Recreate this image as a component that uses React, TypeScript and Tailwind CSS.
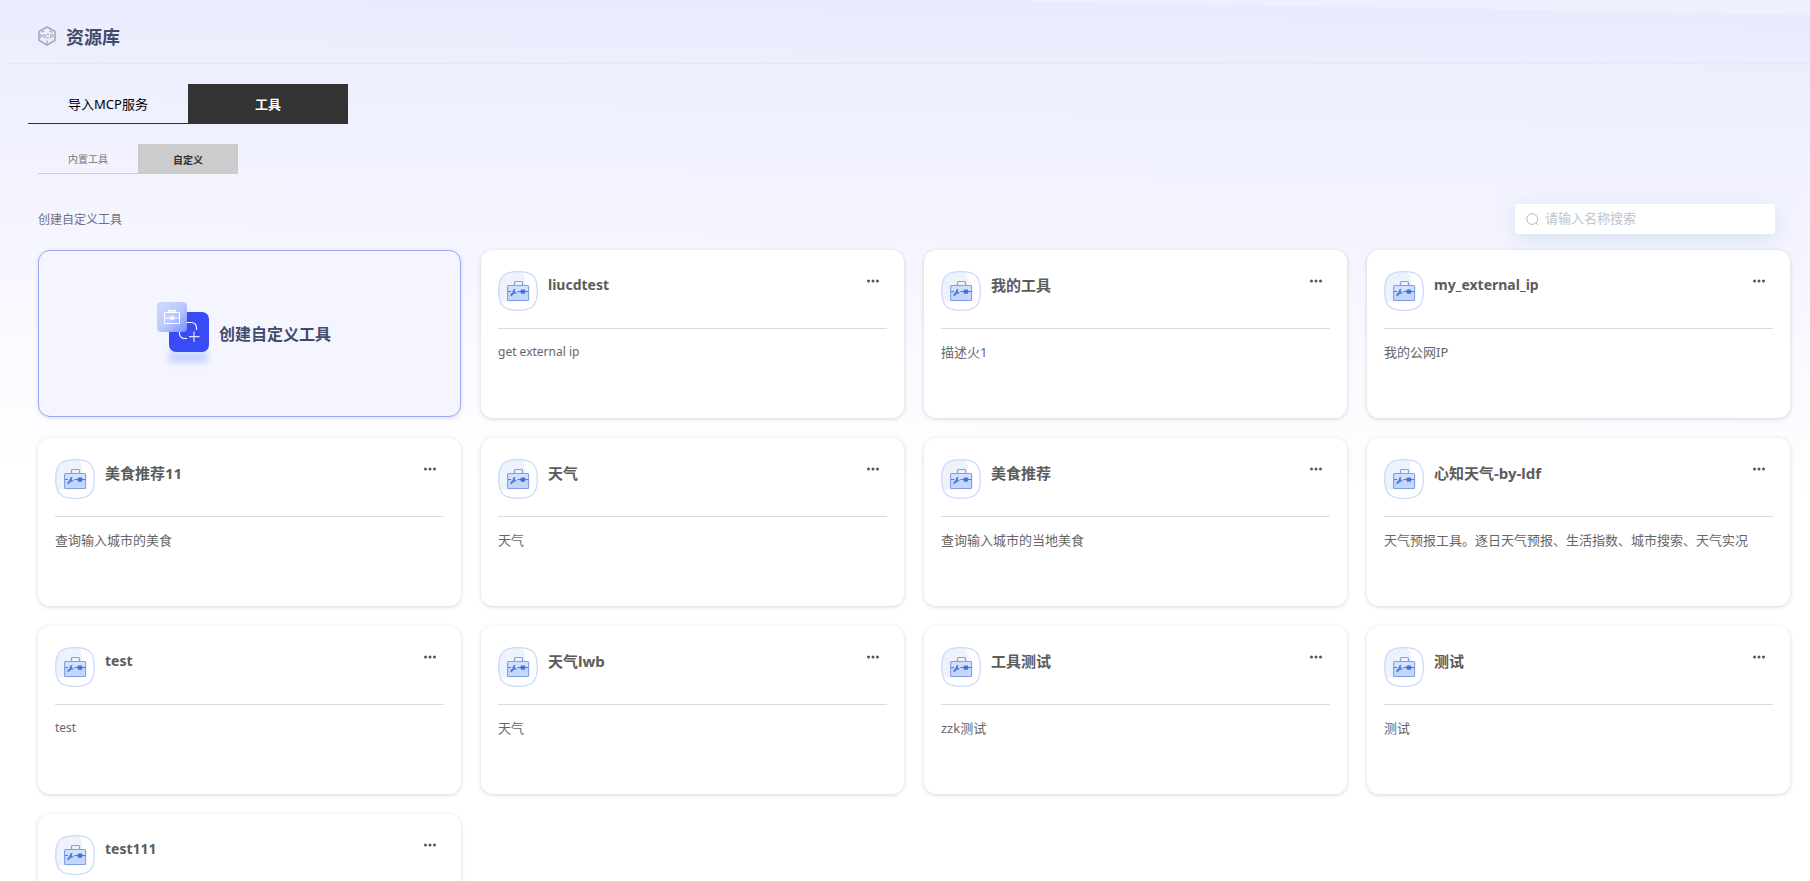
const tools = [
  { name: 'liucdtest', desc: 'get external ip' },
  { name: '我的工具', desc: '描述火1' },
  { name: 'my_external_ip', desc: '我的公网IP' },
  { name: '美食推荐11', desc: '查询输入城市的美食' },
  { name: '天气', desc: '天气' },
  { name: '美食推荐', desc: '查询输入城市的当地美食' },
  { name: '心知天气-by-ldf', desc: '天气预报工具。逐日天气预报、生活指数、城市搜索、天气实况' },
  { name: 'test', desc: 'test' },
  { name: '天气lwb', desc: '天气' },
  { name: '工具测试', desc: 'zzk测试' },
  { name: '测试', desc: '测试' },
  { name: 'test111', desc: '' },
];

const isLatin = (text: string) => /^[\x20-\x7e]*$/.test(text);

function McpIcon() {
  return (
    <svg width="18" height="20" viewBox="0 0 18 20" fill="none" stroke="#a3a9b9" strokeWidth="1.6" aria-hidden="true">
      <path d="M1 6.500V5.400L9 1l8 4.400v1.100M1 13.400v1L9 19l8-4.600v-1M1 5v10M17 5v10" />
      <path d="M3.500 6.300 6.500 4.900M14.500 6.300l-3-1.400M9 14.500V19" strokeWidth="1.200" />
      <path d="M2.800 12.300V8.200l1.700 2.300 1.700-2.300v4.100M11 8.600c-1.700-.7-3.200.1-3.200 1.700s1.500 2.300 3.200 1.600M12.600 12.300V8.500h1.700c1.700 0 1.700 2.200 0 2.200h-1.700" strokeWidth="1" />
    </svg>
  );
}

function ToolIcon() {
  return (
    <svg className="shrink-0" width="40" height="40" viewBox="0 0 40 40" fill="none" aria-hidden="true">
      <path d="M20 .7C34.500.7 39.300 5.500 39.300 20S34.500 39.300 20 39.300.7 34.500.7 20 5.500.7 20 .7Z" fill="#fff" />
      <path d="M20 .7c1.500 0 3 .1 4.300.2C26 3.800 27 7.500 27 12c0 11-1 15-1 18.500H2C1 27.500.7 24 .7 20 .7 5.500 5.500.7 20 .7Z" fill="#edf2fc" />
      <path d="M20 .7C34.500.7 39.300 5.500 39.300 20S34.500 39.300 20 39.300.7 34.500.7 20 5.500.7 20 .7Z" stroke="#c9dafc" strokeWidth="1.300" />
      <path d="M16.500 14.500v-3a1 1 0 0 1 1-1h6a1 1 0 0 1 1 1v3" stroke="#7fa0e6" strokeWidth="1.200" />
      <rect x="9.600" y="14.500" width="21" height="15" rx="1" fill="#c4d7fb" />
      <rect x="10.200" y="14.800" width="19.800" height="5" fill="#d3e1fc" />
      <rect x="9.600" y="14.500" width="21" height="15" rx="1" stroke="#7fa0e6" strokeWidth="1.100" />
      <path d="M10 20.500h3M19.500 20.500h11" stroke="#4d7de0" strokeWidth="1" />
      <path d="m13.300 24 3-3" stroke="#4d7de0" strokeWidth="2" strokeLinecap="round" />
      <path d="M17.700 18.200a2.300 2.300 0 1 0 1.200 3.400l-1.900-.4-.4-1.600Z" fill="#4d7de0" />
      <rect x="22.600" y="18.400" width="4.600" height="4.400" rx="1" fill="#3f72de" />
    </svg>
  );
}

function CreateIcon() {
  return (
    <svg className="shrink-0" width="58" height="70" viewBox="0 0 58 70" fill="none" aria-hidden="true">
      <defs>
        <linearGradient id="tile" x1="4" y1="4" x2="34" y2="34" gradientUnits="userSpaceOnUse">
          <stop stopColor="#cddafe" />
          <stop offset="0.500" stopColor="#b9c8ff" />
          <stop offset="1" stopColor="#7388fb" />
        </linearGradient>
        <filter id="glow" x="0" y="44" width="58" height="26" filterUnits="userSpaceOnUse">
          <feGaussianBlur stdDeviation="3.500" />
        </filter>
      </defs>
      <rect x="14" y="53" width="40" height="10" rx="4" fill="#bfcffe" filter="url(#glow)" />
      <rect x="15" y="13" width="40" height="40" rx="7" fill="#3a4bf6" />
      <path d="M33 23.500h4.500a5 5 0 0 1 5 5V31M25.500 31v3.500a5 5 0 0 0 5 5H33" stroke="#fff" strokeWidth="1.100" />
      <path d="M40 32.500v10.500M35 37.700h10.500" stroke="#dfe3ff" strokeWidth="1.200" />
      <rect x="3" y="3" width="30" height="30" rx="4" fill="url(#tile)" />
      <path d="M14.500 13.500v-2h7v2M10.500 13.500h15v11h-15ZM10.500 19H16M20 19h5.500" stroke="#fff" strokeWidth="1" />
      <rect x="14" y="11" width="8" height="2.500" fill="#fff" fillOpacity="0.550" />
      <rect x="16.300" y="17.200" width="3.600" height="3.600" fill="#fff" />
    </svg>
  );
}

export default function App() {
  return (
    <div className="h-screen overflow-hidden bg-white bg-[linear-gradient(181deg,#eeefff_0,#eeefff_15px,#eaeafd_15px,#edeffe_90px,#f6f6ff_285px,#ffffff_500px)] font-['Noto_Sans','Noto_Sans_CJK_SC',sans-serif]">
      <header className="ml-2 flex h-16 items-center gap-[10px] border-b border-[#e8e9ee] pl-[30px] pt-2">
        <McpIcon />
        <h1 className="pt-0.5 text-[18px] leading-6 font-bold text-[#434b6b]">资源库</h1>
      </header>

      <nav className="mt-5 ml-7 flex text-[13px]">
        <button className="h-10 w-40 border-b border-[#333] pt-0.5 text-black">导入MCP服务</button>
        <button className="h-10 w-40 bg-[#333] pt-0.5 font-bold text-white">工具</button>
      </nav>
      <nav className="mt-5 ml-[38px] flex text-[10px]">
        <button className="h-[30px] w-[100px] border-b border-[#ccc] pt-0.5 text-[#777]">内置工具</button>
        <button className="h-[30px] w-[100px] bg-[#ccc] pt-0.5 font-bold text-[#333]">自定义</button>
      </nav>

      <div className="mt-[30px] mr-[35px] ml-[38px] flex items-center justify-between">
        <h2 className="pt-0.5 text-[12px] text-[#6f6f88]">创建自定义工具</h2>
        <label className="flex h-[30px] w-[260px] items-center gap-[6px] rounded-[3px] bg-white px-[11px] shadow-[0_5px_20px_rgba(190,205,235,0.5)]">
          <svg width="13" height="13" viewBox="0 0 13 13" fill="none" stroke="#b4b8c2" aria-hidden="true">
            <circle cx="6.200" cy="6" r="5.400" />
            <path d="m10 10 2.300 2.300" />
          </svg>
          <input
            aria-label="搜索"
            placeholder="请输入名称搜索"
            className="min-w-0 flex-1 text-[13px] text-[#606266] outline-none placeholder:text-[#c0c4cc]"
          />
        </label>
      </div>

      <main className="mt-4 mr-5 ml-[38px] grid grid-cols-4 gap-5">
        <button className="mb-px flex h-[167px] items-center justify-center gap-[7px] rounded-xl border border-[#9aa5fb] bg-[#f5f5ff] pr-[14px] shadow-[0_1px_4px_rgba(0,0,0,0.12)]">
          <CreateIcon />
          <span className="text-[16px] font-bold text-[#434b6b]">创建自定义工具</span>
        </button>
        {tools.map((tool) => (
          <article key={tool.name} className="h-[168px] rounded-xl bg-white px-[17px] pt-[21px] shadow-[0_1px_4px_rgba(0,0,0,0.16)]">
            <div className="flex h-[58px] items-start gap-[10px] border-b border-[#dcdcdc]">
              <ToolIcon />
              <h3 className={`flex-1 pt-[3px] leading-[22px] font-bold text-[#5c5c5c] ${isLatin(tool.name) ? 'text-[14px]' : 'text-[15px]'}`}>
                {tool.name}
              </h3>
              <button aria-label="更多" className="mr-1 p-1 pt-2">
                <svg width="12" height="4" viewBox="0 0 12 4" fill="#555" aria-hidden="true">
                  <circle cx="1.500" cy="2" r="1.500" />
                  <circle cx="6" cy="2" r="1.500" />
                  <circle cx="10.500" cy="2" r="1.500" />
                </svg>
              </button>
            </div>
            <p className={`mt-[13px] leading-5 text-[#666] ${isLatin(tool.desc) ? 'text-[12px]' : 'text-[13px]'}`}>{tool.desc}</p>
          </article>
        ))}
      </main>
    </div>
  );
}
